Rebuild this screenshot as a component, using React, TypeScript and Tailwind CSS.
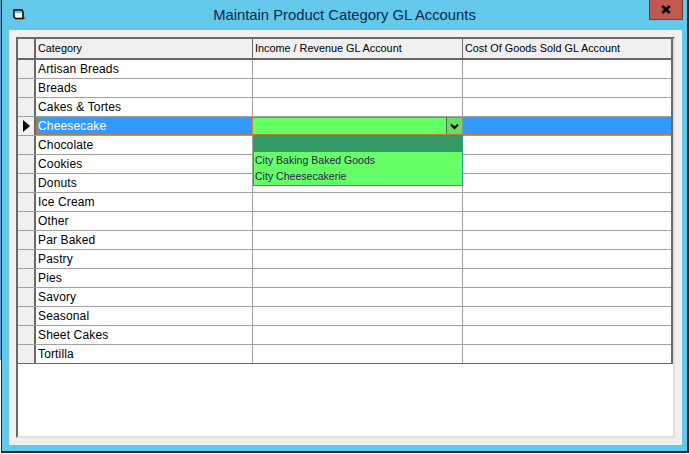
const FONT = "font-['Liberation_Sans',Arial,sans-serif]";
const rows = ["Artisan Breads","Breads","Cakes & Tortes","Cheesecake","Chocolate","Cookies","Donuts","Ice Cream","Other","Par Baked","Pastry","Pies","Savory","Seasonal","Sheet Cakes","Tortilla"];

function Row({ name, selected }: { name: string; selected: boolean }) {
  return (
    <div className={`flex h-[19px] border-b border-[#a0a0a0] last:border-[#696969] ${selected ? "bg-[#3399ff]" : "bg-white"}`}>
      <div className="w-[18px] shrink-0 flex items-center justify-center bg-[#f0f0f0] border-r-2 border-[#696969]">
        {selected && <svg width="7" height="12" viewBox="0 0 7 12"><path d="M0 0L7 6L0 12Z" fill="#000" /></svg>}
      </div>
      <div className="flex-1 flex">
        <div className={`w-[217px] shrink-0 pl-[2px] border-r border-[#a0a0a0] text-[12px] tracking-[0.15px] leading-[18px] ${selected ? "text-white outline-1 -outline-offset-1 outline-dotted outline-[#c87830]" : "text-black"}`}>{name}</div>
        <div className={`w-[210px] shrink-0 border-r border-r-[#a0a0a0] relative ${selected ? "border-y border-y-[#c87830] border-dotted" : ""}`}>
          {selected && (
            <>
              <div className="absolute left-0 top-0 w-[209px] h-[16px] bg-[#66ff66] flex justify-end">
                <div className="w-[16px] h-[16px] bg-[#66dd66] border-l border-[#507050] flex items-center justify-center pr-[1px]">
                  <svg width="9" height="7" viewBox="0 0 9 7"><path d="M1 1.5L4.5 5L8 1.5" fill="none" stroke="#000" strokeWidth="2" /></svg>
                </div>
              </div>
              <div className="absolute left-0 top-[17px] z-10 w-[210px] h-[51px] bg-[#66ff66] border-x border-b border-[#2a9d8f]">
                <div className="h-[17px] bg-[#339966]" />
                <div className="h-[16px] pl-[1px] text-[10.5px] tracking-[0.02px] leading-[16px] text-[#2a1a50]">City Baking Baked Goods</div>
                <div className="h-[16px] pl-[1px] text-[10.5px] tracking-[0.02px] leading-[16px] text-[#2a1a50]">City Cheesecakerie</div>
              </div>
            </>
          )}
        </div>
        <div className={`flex-1 ${selected ? "border-y border-dotted border-[#c87830]" : ""}`} />
      </div>
    </div>
  );
}

export default function App() {
  return (
    <div className={`${FONT} w-[689px] h-[454px] bg-white overflow-hidden flex`}>
      <div className="w-[1px] h-[360px] shrink-0 bg-[#5a9cc4]" />
      <div className="w-[688px] h-[453px] bg-[#63c8ea] border-l border-r-2 border-b-2 border-[#2b2b2b] flex flex-col">
        <div className="h-[30px] shrink-0 flex items-start relative">
          <svg className="ml-[11px] mt-[9px]" width="14" height="12" viewBox="0 0 14 12">
            <path d="M1 1H9L10 3V9.5H2.5L1 8Z" fill="#fff" stroke="#000" strokeWidth="1.5" />
            <path d="M1.5 3H9.5" stroke="#1aa" strokeWidth="1.2" />
            <path d="M11 9H13" stroke="#777" strokeWidth="1.5" />
          </svg>
          <div className="absolute inset-x-0 top-[5px] text-center text-[14.8px] leading-[20px] text-[#0a2a4a]">Maintain Product Category GL Accounts</div>
          <div className="absolute right-[4px] top-0 w-[34px] h-[20px] bg-[#c2584f] border border-t-0 border-[#7a3a35] flex items-center justify-center">
            <svg width="10" height="9" viewBox="0 0 10 9"><path d="M1.2 1L8.8 8M8.8 1L1.2 8" stroke="#000" strokeWidth="2.6" /></svg>
          </div>
        </div>
        <div className="ml-[7px] mr-[5px] mb-[6px] flex-1 min-h-0 bg-[#f0f0f0] pl-[7px] pr-[7px] py-[7px]">
          <div className="h-full bg-white border-t-2 border-l-2 border-[#696969] border-r-2 border-r-[#e0e0e0] border-b-2 border-b-[#e0e0e0]">
            <div className="flex h-[21px] bg-[#f0f0f0] border-b-2 border-[#696969] border-r-2 border-r-[#696969] text-[10.85px] leading-[19px] text-black">
              <div className="w-[18px] shrink-0 border-r-2 border-[#696969]" />
              <div className="w-[217px] shrink-0 pl-[2px] border-r border-[#696969]">Category</div>
              <div className="w-[210px] shrink-0 pl-[2px] border-r border-[#696969]">Income / Revenue GL Account</div>
              <div className="flex-1 pl-[2px]">Cost Of Goods Sold GL Account</div>
            </div>
            <div className="border-r-2 border-[#696969]">
              {rows.map((r) => <Row key={r} name={r} selected={r === "Cheesecake"} />)}
            </div>
          </div>
        </div>
      </div>
    </div>
  );
}
